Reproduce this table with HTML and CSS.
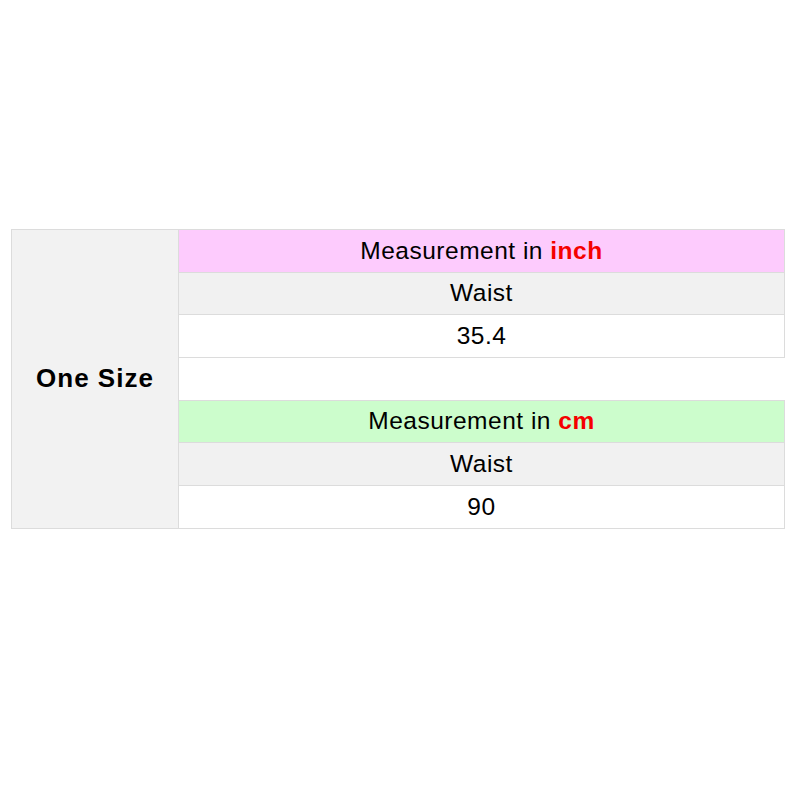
FILE: index.html
```html
<!DOCTYPE html>
<html>
<head>
<meta charset="utf-8">
<link rel="stylesheet" href="styles.css">
</head>
<body>
<table class="size-table">
  <tr class="row">
    <td class="size-cell" rowspan="7">One Size</td>
    <td class="cell head-inch">Measurement in <span class="unit">inch</span></td>
  </tr>
  <tr class="row"><td class="cell label">Waist</td></tr>
  <tr class="row"><td class="cell value">35.4</td></tr>
  <tr class="row"><td class="cell spacer"></td></tr>
  <tr class="row"><td class="cell head-cm">Measurement in <span class="unit">cm</span></td></tr>
  <tr class="row"><td class="cell label">Waist</td></tr>
  <tr class="row"><td class="cell value">90</td></tr>
</table>
</body>
</html>
```
FILE: styles.css
```css
html, body {
  margin: 0;
  padding: 0;
  background: #ffffff;
}
body {
  padding: 229px 0 0 11px;
  font-family: "Liberation Sans", Arial, sans-serif;
  color: #000;
}
.size-table {
  border-collapse: collapse;
  width: 774px;
}
.row {
  height: 42.7px;
}
.size-cell {
  width: 166px;
  background: #f2f2f2;
  border: 1px solid #dcdcdc;
  font-weight: bold;
  font-size: 26px;
  letter-spacing: 1px;
  text-align: center;
  vertical-align: middle;
  padding: 0;
}
.cell {
  border: 1px solid #dcdcdc;
  text-align: center;
  vertical-align: middle;
  font-size: 24.5px;
  letter-spacing: 0.5px;
  line-height: 1;
  padding: 0;
}
.head-inch { background: #fdcbfd; }
.head-cm { background: #ccfdcc; }
.label { background: #f1f1f1; }
.value { background: #ffffff; }
.spacer {
  border-right: none;
  border-top: 1px solid #dcdcdc;
  background: #ffffff;
}
.unit {
  color: #f50000;
  font-weight: bold;
}
```
